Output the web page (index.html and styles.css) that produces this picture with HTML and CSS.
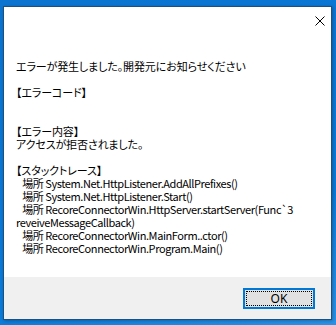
FILE: index.html
```html
<!DOCTYPE html>
<html>
<head>
    <title>エラー</title>
    <link rel="stylesheet" href="styles.css">
</head>
<body>
    <div class="dialog">
        <!-- Title bar with close button only -->
        <div class="title-bar">
            <button class="close-btn" aria-label="閉じる">
                <svg width="10" height="10" viewBox="0 0 10 10">
                    <path d="M0.5 0.5 L9.5 9.5 M9.5 0.5 L0.5 9.5" stroke="#000" stroke-width="1" fill="none"/>
                </svg>
            </button>
        </div>

        <!-- Message text -->
        <div class="message">エラーが発生しました。開発元にお知らせください

【エラーコード】


【エラー内容】
アクセスが拒否されました。

【スタックトレース】
<span class="trace">   場所 System.Net.HttpListener.AddAllPrefixes()
   場所 System.Net.HttpListener.Start()
   場所 RecoreConnectorWin.HttpServer.startServer(Func`3
reveiveMessageCallback)
   場所 RecoreConnectorWin.MainForm..ctor()
   場所 RecoreConnectorWin.Program.Main()</span></div>

        <!-- Button area -->
        <div class="footer">
            <button class="ok-btn"><span>OK</span></button>
        </div>
    </div>
</body>
</html>
```

FILE: styles.css
```css
/* Desktop behind the dialog */
body {
    margin: 0;
    height: 325px;
    overflow: hidden;
    background: linear-gradient(160deg, #0a74d0 0%, #0a7ad8 70%, #2a92e6 100%);
    font-family: "Noto Sans CJK JP", "Noto Sans", sans-serif;
}

.dialog {
    margin: 6px 0 0 3px;
    width: 327px;
    height: 312px;
    border: 1px solid #1d4f7f;
    background-color: #fff;
    display: flex;
    flex-direction: column;
    box-shadow: 1px 1px 3px rgba(0, 0, 0, 0.25);
}

/* Title bar */
.title-bar {
    height: 30px;
    display: flex;
    justify-content: flex-end;
    align-items: center;
}

.close-btn {
    width: 46px;
    height: 30px;
    border: none;
    background: none;
    padding: 0;
    display: flex;
    align-items: center;
    justify-content: center;
    margin-right: -12px;
    position: relative;
    top: -1px;
}

.close-btn svg {
    display: block;
}

/* Message */
.message {
    flex: 1;
    padding: 23px 8px 0 12px;
    font-size: 11px;
    line-height: 13px;
    letter-spacing: -0.12px;
    color: #000;
    white-space: pre;
    font-feature-settings: "palt";
}

/* Stack trace lines are mostly latin and run a little tighter */
.trace {
    letter-spacing: -0.42px;
}

/* Footer with OK */
.footer {
    height: 42px;
    background-color: #f0f0f0;
    display: flex;
    justify-content: flex-end;
    align-items: center;
    padding-right: 16px;
}

.ok-btn {
    width: 72px;
    height: 21px;
    padding: 1px;
    border: 2px solid #0078d7;
    background-color: #e1e1e1;
    font-family: "Noto Sans", sans-serif;
    font-size: 12px;
    color: #000;
}

.ok-btn span {
    display: flex;
    align-items: center;
    justify-content: center;
    height: 100%;
    box-sizing: border-box;
    border: 1px dotted #000;
}
```
